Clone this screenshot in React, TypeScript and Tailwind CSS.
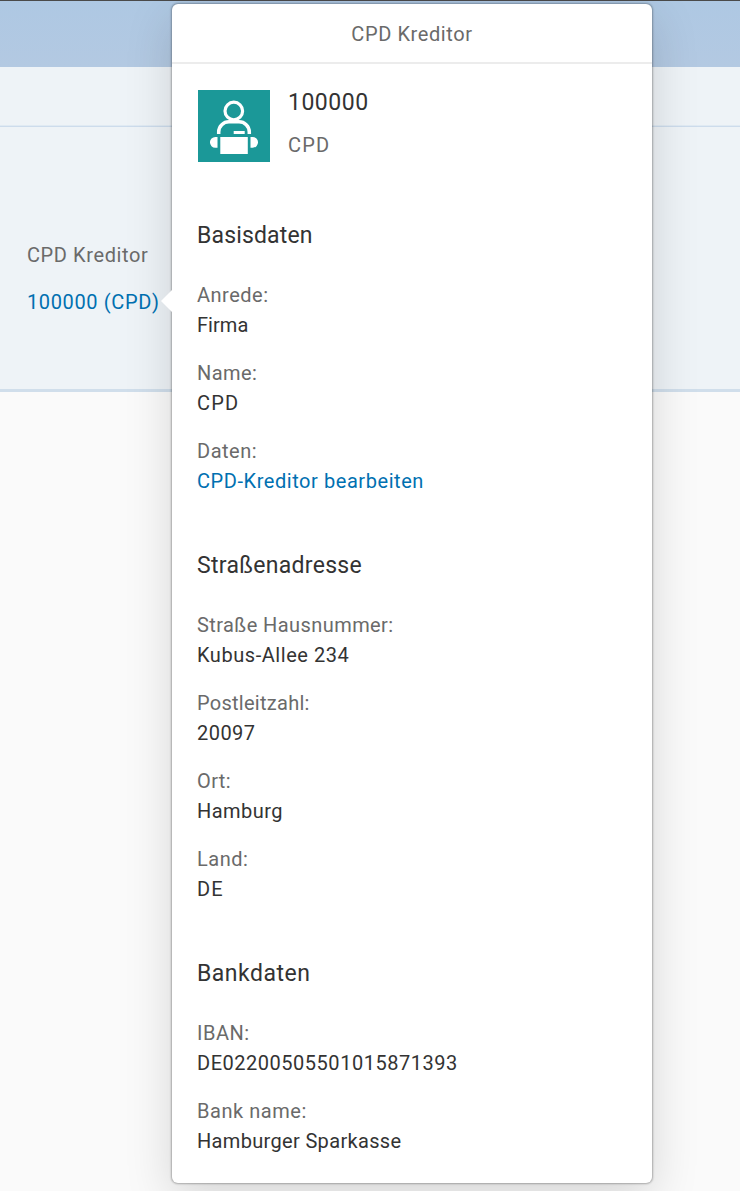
import React from 'react';

interface Field {
  label: string;
  value: string;
  labelTracking: string;
  valueTracking: string;
  isLink?: boolean;
}

interface Group {
  title: string;
  tracking: string;
  fields: Field[];
}

const groups: Group[] = [
  {
    title: 'Basisdaten',
    tracking: 'tracking-[0.15px]',
    fields: [
      { label: 'Anrede:', value: 'Firma', labelTracking: 'tracking-[0.5px]', valueTracking: 'tracking-[0.05px]' },
      { label: 'Name:', value: 'CPD', labelTracking: 'tracking-[0.4px]', valueTracking: 'tracking-[1.2px]' },
      {
        label: 'Daten:',
        value: 'CPD-Kreditor bearbeiten',
        labelTracking: 'tracking-[0.5px]',
        valueTracking: 'tracking-[0.56px]',
        isLink: true,
      },
    ],
  },
  {
    title: 'Straßenadresse',
    tracking: 'tracking-[0.3px]',
    fields: [
      { label: 'Straße Hausnummer:', value: 'Kubus-Allee 234', labelTracking: 'tracking-[0.42px]', valueTracking: 'tracking-[0.55px]' },
      { label: 'Postleitzahl:', value: '20097', labelTracking: 'tracking-[0.27px]', valueTracking: 'tracking-[0.45px]' },
      { label: 'Ort:', value: 'Hamburg', labelTracking: 'tracking-[0.4px]', valueTracking: 'tracking-[0.45px]' },
      { label: 'Land:', value: 'DE', labelTracking: 'tracking-[0.5px]', valueTracking: 'tracking-[1px]' },
    ],
  },
  {
    title: 'Bankdaten',
    tracking: 'tracking-[0.5px]',
    fields: [
      { label: 'IBAN:', value: 'DE02200505501015871393', labelTracking: 'tracking-[0.5px]', valueTracking: 'tracking-[0.52px]' },
      { label: 'Bank name:', value: 'Hamburger Sparkasse', labelTracking: 'tracking-[0.55px]', valueTracking: 'tracking-[0.33px]' },
    ],
  },
];

const SupplierIcon: React.FC = () => (
  <svg viewBox="0 0 72 72" className="size-[72px] shrink-0 bg-[#1b9898]" aria-hidden="true">
    <circle cx="35.8" cy="21" r="8.8" fill="none" stroke="#fff" strokeWidth="3.2" />
    <path d="M20.7 44v-2c0-6 4.8-10.200 10.300-10.200h10c5.500 0 10.300 4.200 10.300 10.200V44" fill="none" stroke="#fff" strokeWidth="3.500" />
    <path d="M35.700 41h11v3h-11zM22.300 47h27.500v17H22.300zM19.500 47v10.700h-2.200a5.350 5.350 0 0 1 0-10.700zM52.500 47v10.700h2.200a5.350 5.350 0 0 0 0-10.700z" fill="#fff" />
  </svg>
);

const GroupSection: React.FC<{ group: Group }> = ({ group }) => (
  <section>
    <h3 className={`h-9 text-[23px] leading-[38px] text-[#333] ${group.tracking}`}>{group.title}</h3>
    <dl className="mt-[27px] flex flex-col gap-[18px]">
      {group.fields.map((field) => (
        <div key={field.label} className="leading-[30px]">
          <dt className="text-[#6a6a6a]">
            <span className={field.labelTracking}>{field.label}</span>
          </dt>
          <dd className={field.isLink ? 'text-[#0070b1]' : 'text-[#333]'}>
            <span className={field.valueTracking}>{field.value}</span>
          </dd>
        </div>
      ))}
    </dl>
  </section>
);

const QuickView: React.FC = () => (
  <div className="absolute top-1 left-[172px] h-[1179px] w-[480px] rounded-md bg-white shadow-[0_0_2px_1px_rgba(0,0,0,0.28),0_15px_48px_0_rgba(0,0,0,0.15)]">
    {/* Arrow towards the link */}
    <div className="absolute top-[286px] -left-[11px] h-[22px] w-[11px] bg-white [clip-path:polygon(100%_0,0_50%,100%_100%)]" />
    <header className="h-[60px] border-b-2 border-[#ececec] text-center leading-[60px] text-[#6a6a6a]">
      <span className="tracking-[0.6px]">CPD Kreditor</span>
    </header>
    <div className="px-[25px] pt-[26px]">
      <div className="flex gap-[18px] pl-px">
        <SupplierIcon />
        <div>
          <p className="-mt-1.5 h-9 text-[23px] leading-[38px] text-[#333]">
            <span className="tracking-[0.5px]">100000</span>
          </p>
          <p className="mt-[10px] leading-[30px] text-[#6a6a6a]">
            <span className="tracking-[1.2px]">CPD</span>
          </p>
        </div>
      </div>
      <div className="mt-[55px] flex flex-col gap-[51px]">
        {groups.map((group) => (
          <GroupSection key={group.title} group={group} />
        ))}
      </div>
    </div>
  </div>
);

export default function App() {
  return (
    <div className="relative flex h-[1191px] w-full flex-col overflow-hidden bg-[#fafafa] font-['Roboto',sans-serif] text-[20px]">
      <div className="h-[67px] border-t border-[#4a4a4a] bg-linear-to-b from-[#aec8e3] to-[#b3c9e2]" />
      <div className="h-[60px] border-b border-[#cddcec] bg-[#eef3f7] shadow-[inset_0_-1px_0_#e0eaf3]" />
      <div className="h-[265px] border-b-[3px] border-[#d0deeb] bg-[#eef3f7] pt-[113px] pl-[27px] leading-[30px]">
        <p className="text-[#6a6a6a]">
          <span className="tracking-[0.6px]">CPD Kreditor</span>
        </p>
        <p className="mt-[17px] text-[#0070b1]">
          <span className="tracking-[0.63px]">100000 (CPD)</span>
        </p>
      </div>
      <QuickView />
    </div>
  );
}
